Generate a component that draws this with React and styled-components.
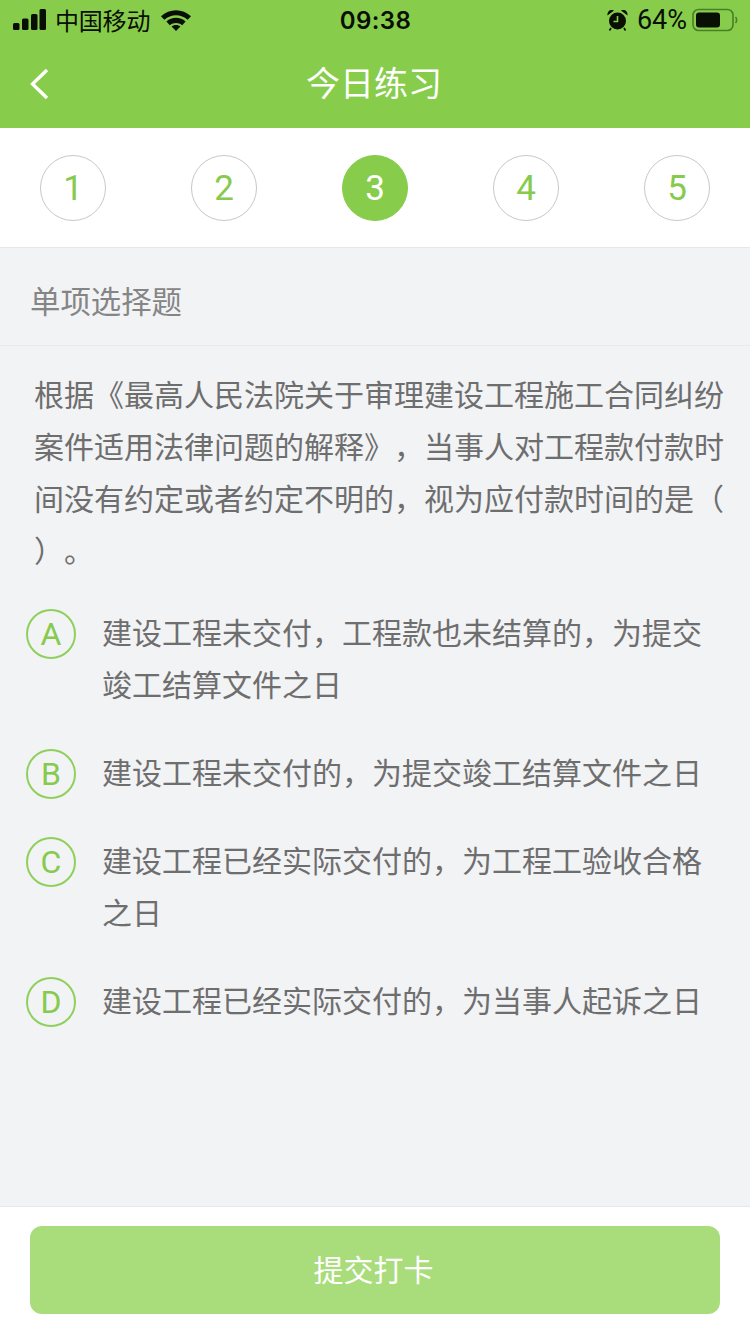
import React from "react"
import styled, { createGlobalStyle } from "styled-components"

const GlobalStyle = createGlobalStyle`
    html, body {
        margin: 0;
        padding: 0;
        background: #f2f3f5;
    }
    * {
        box-sizing: border-box;
    }
`

const CJK = `"Noto Sans CJK SC", "Noto Sans", sans-serif`
const LATIN = `Roboto, "Liberation Sans", "Noto Sans CJK SC", sans-serif`

const Page = styled.div`
    display: flex;
    flex-direction: column;
    width: 750px;
    height: 1334px;
    background: #f2f3f5;
    font-family: ${CJK};
    text-spacing-trim: space-all;
    overflow: hidden;
`

const Header = styled.header`
    background: #87cd4b;
    height: 128px;
    flex-shrink: 0;
`

const StatusBar = styled.div`
    display: grid;
    grid-template-columns: 1fr auto 1fr;
    align-items: center;
    height: 40px;
    padding: 0 12px 0 13px;
    color: #0a0f05;
`

const StatusLeft = styled.div`
    display: flex;
    align-items: center;
`

const StatusRight = styled.div`
    display: flex;
    align-items: center;
    justify-content: flex-end;
`

const Carrier = styled.span`
    font-size: 24px;
    line-height: 40px;
    margin-left: 8px;
    margin-right: 11px;
    letter-spacing: -0.2px;
`

const Clock = styled.span`
    font-family: Inter, "Liberation Sans", sans-serif;
    font-size: 24px;
    font-weight: 600;
    letter-spacing: 0.4px;
`

const Percent = styled.span`
    font-family: ${LATIN};
    font-weight: 400;
    font-size: 27px;
    margin-left: 9px;
    margin-right: 5px;
`

const NavBar = styled.div`
    position: relative;
    display: flex;
    align-items: center;
    justify-content: center;
    height: 88px;
`

const BackButton = styled.svg`
    position: absolute;
    left: 29px;
    top: 28px;
`

const Title = styled.h1`
    margin: 0 2px 4px 0;
    color: #fff;
    font-size: 34px;
    font-weight: 400;
    line-height: 84px;
`

const Steps = styled.div`
    display: flex;
    justify-content: space-between;
    height: 120px;
    padding: 27px 40px 0;
    background: #fff;
    border-bottom: 1px solid #e6e7e9;
    flex-shrink: 0;
`

const Step = styled.div`
    display: flex;
    align-items: center;
    justify-content: center;
    width: 66px;
    height: 66px;
    border-radius: 50%;
    border: 1px solid ${(p) => (p.$active ? "#87cd4b" : "#c8c8c8")};
    background: ${(p) => (p.$active ? "#87cd4b" : "#fff")};
    color: ${(p) => (p.$active ? "#fff" : "#86ca4e")};
    font-family: ${LATIN};
    font-weight: 400;
    font-size: 35px;
`

const QuestionType = styled.div`
    height: 98px;
    padding-left: 30px;
    border-bottom: 1px solid #e9eaec;
    color: #858585;
    font-size: 30.4px;
    line-height: 104px;
    flex-shrink: 0;
`

const Question = styled.p`
    margin: 0;
    padding: 21px 0 0 34px;
    color: #6e6e6e;
    font-size: 30px;
    line-height: 52px;
    white-space: nowrap;
`

const Options = styled.div`
    display: flex;
    flex-direction: column;
    gap: 36px;
    padding: 31px 0 0 26px;
`

const Option = styled.div`
    display: flex;
    align-items: flex-start;
`

const OptionLetter = styled.div`
    display: flex;
    align-items: center;
    justify-content: center;
    width: 50px;
    height: 50px;
    margin: 3px 0 -1px;
    border-radius: 50%;
    border: 2px solid #8fd05c;
    color: #86ca4e;
    font-family: ${LATIN};
    font-weight: 400;
    font-size: 32px;
    flex-shrink: 0;
`

const OptionText = styled.div`
    margin-left: 26px;
    width: 610px;
    color: #6e6e6e;
    font-size: 30px;
    line-height: 52px;
    transform: translateY(-1px);
`

const Footer = styled.footer`
    margin-top: auto;
    height: 128px;
    padding: 19px 30px 0;
    background: #fff;
    border-top: 1px solid #e6e7e9;
    flex-shrink: 0;
`

const SubmitButton = styled.button`
    display: block;
    width: 690px;
    height: 88px;
    padding: 0 3px 4px 0;
    border: none;
    border-radius: 12px;
    background: #a9dc7a;
    color: #fff;
    font-family: ${CJK};
    font-size: 30px;
`

const SignalIcon = () => (
    <svg width="34" height="22" viewBox="0 0 34 22">
        <rect x="0" y="14" width="6.5" height="7" rx="1.5" fill="#0a0f05" />
        <rect x="9" y="9.5" width="6.5" height="11.5" rx="1.5" fill="#0a0f05" />
        <rect x="18" y="5" width="6.5" height="16" rx="1.5" fill="#0a0f05" />
        <rect x="26.5" y="0" width="6.5" height="21" rx="1.5" fill="#0a0f05" />
    </svg>
)

const WifiIcon = () => (
    <svg width="30" height="22" viewBox="0 0 30 22">
        <path d="M0 7.2 C8.3 -0.9 21.7 -0.9 30 7.2 L26.6 10.8 C20.2 4.6 9.8 4.6 3.4 10.8 Z" fill="#0a0f05" />
        <path d="M5.4 12.6 C10.8 7.6 19.2 7.6 24.6 12.6 L21.2 16.2 C17.6 13.1 12.4 13.1 8.8 16.2 Z" fill="#0a0f05" />
        <path d="M10.6 17.6 C13 15.6 17 15.6 19.4 17.6 L15 22 Z" fill="#0a0f05" />
    </svg>
)

const AlarmIcon = () => (
    <svg width="21" height="22" viewBox="0 0 21 22">
        <circle cx="10.5" cy="12" r="8.5" fill="#0a0f05" />
        <path d="M0.5 6.5 C0 2 3.5 0 7 1.5 Z M20.5 6.5 C21 2 17.5 0 14 1.5 Z" fill="#0a0f05" />
        <path d="M4 19 L2.5 21.5 M17 19 L18.5 21.5" stroke="#0a0f05" strokeWidth="1.6" />
        <path d="M10.5 7 V12.5 H6.5" stroke="#87cd4b" strokeWidth="1.6" fill="none" />
    </svg>
)

const BatteryIcon = () => (
    <svg width="46" height="24" viewBox="0 0 46 24">
        <rect x="1" y="1.5" width="40" height="21" rx="5.5" fill="none" stroke="#4c7f25" strokeWidth="1.6" />
        <rect x="4" y="4.5" width="24" height="15" rx="3" fill="#0a0f05" />
        <path d="M43.5 9 C45 10.5 45 13.5 43.5 15" fill="none" stroke="#4c7f25" strokeWidth="1.6" />
    </svg>
)

const steps = [1, 2, 3, 4, 5]

const options = [
    { letter: "A", text: "建设工程未交付，工程款也未结算的，为提交竣工结算文件之日" },
    { letter: "B", text: "建设工程未交付的，为提交竣工结算文件之日" },
    { letter: "C", text: "建设工程已经实际交付的，为工程工验收合格之日" },
    { letter: "D", text: "建设工程已经实际交付的，为当事人起诉之日" },
]

const App = () => {
    return (
        <Page>
            <GlobalStyle />
            <Header>
                <StatusBar>
                    <StatusLeft>
                        <SignalIcon />
                        <Carrier>中国移动</Carrier>
                        <WifiIcon />
                    </StatusLeft>
                    <Clock>09:38</Clock>
                    <StatusRight>
                        <AlarmIcon />
                        <Percent>64%</Percent>
                        <BatteryIcon />
                    </StatusRight>
                </StatusBar>
                <NavBar>
                    <BackButton width="20" height="32" viewBox="0 0 20 32">
                        <path d="M18 2 L3.5 16 L18 30" fill="none" stroke="#fff" strokeWidth="3.4" />
                    </BackButton>
                    <Title>今日练习</Title>
                </NavBar>
            </Header>
            <Steps>
                {steps.map((n) => (
                    <Step key={n} $active={n === 3}>{n}</Step>
                ))}
            </Steps>
            <QuestionType>单项选择题</QuestionType>
            <Question>
                根据《最高人民法院关于审理建设工程施工合同纠纷<br />
                案件适用法律问题的解释》，当事人对工程款付款时<br />
                间没有约定或者约定不明的，视为应付款时间的是（<br />
                ）。
            </Question>
            <Options>
                {options.map((o) => (
                    <Option key={o.letter}>
                        <OptionLetter>{o.letter}</OptionLetter>
                        <OptionText>{o.text}</OptionText>
                    </Option>
                ))}
            </Options>
            <Footer>
                <SubmitButton>提交打卡</SubmitButton>
            </Footer>
        </Page>
    )
}

export default App
